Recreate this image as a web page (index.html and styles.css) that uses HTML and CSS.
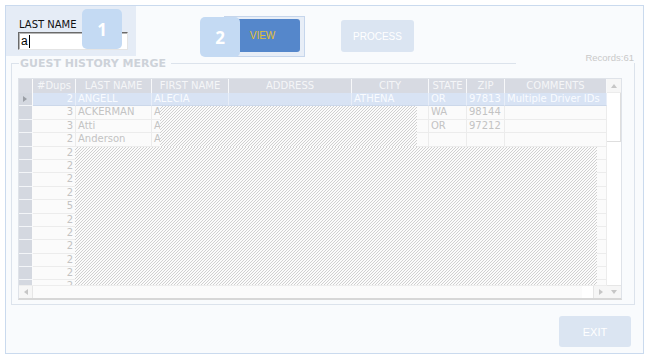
FILE: index.html
```html
<!DOCTYPE html>
<html lang="en">
  <head>
    <meta charset="UTF-8" />
    <title>Guest History Merge</title>
    <link rel="stylesheet" href="styles.css">
  </head>
  <body>
    <div class="window">
      <div class="top-bar">
        <div class="search-panel">
          <div class="field-label">LAST NAME</div>
          <div class="text-box">a<span class="caret"></span></div>
          <span class="step-badge step-one">1</span>
        </div>

        <div class="view-wrap">
          <button class="view-button">VIEW</button>
          <span class="step-badge step-two">2</span>
        </div>

        <button class="pale-button process-button">PROCESS</button>
      </div>

      <div class="group">
        <div class="group-head">
          <span class="group-line short"></span>
          <span class="group-title">GUEST HISTORY MERGE</span>
          <span class="group-line"></span>
        </div>
        <div class="records">Records:61</div>

        <div class="grid">
          <div class="grid-table">
            <div class="grid-row grid-header">
              <div class="row-head"></div>
              <div>#Dups</div>
              <div>LAST NAME</div>
              <div>FIRST NAME</div>
              <div>ADDRESS</div>
              <div>CITY</div>
              <div>STATE</div>
              <div>ZIP</div>
              <div>COMMENTS</div>
            </div>

            <div class="grid-body">
              <div class="grid-row selected">
                <div class="row-head"><span class="row-marker"></span></div>
                <div class="num">2</div>
                <div>ANGELL</div>
                <div>ALECIA</div>
                <div></div>
                <div>ATHENA</div>
                <div>OR</div>
                <div>97813</div>
                <div>Multiple Driver IDs</div>
              </div>
              <div class="grid-row">
                <div class="row-head"></div>
                <div class="num">3</div>
                <div>ACKERMAN</div>
                <div>ANDREW</div>
                <div></div>
                <div></div>
                <div>WA</div>
                <div>98144</div>
                <div></div>
              </div>
              <div class="grid-row">
                <div class="row-head"></div>
                <div class="num">3</div>
                <div>Atti</div>
                <div>Anna</div>
                <div></div>
                <div></div>
                <div>OR</div>
                <div>97212</div>
                <div></div>
              </div>
              <div class="grid-row">
                <div class="row-head"></div>
                <div class="num">2</div>
                <div>Anderson</div>
                <div>Amy</div>
                <div></div><div></div><div></div><div></div><div></div>
              </div>
              <div class="grid-row">
                <div class="row-head"></div><div class="num">2</div>
                <div></div><div></div><div></div><div></div><div></div><div></div><div></div>
              </div>
              <div class="grid-row">
                <div class="row-head"></div><div class="num">2</div>
                <div></div><div></div><div></div><div></div><div></div><div></div><div></div>
              </div>
              <div class="grid-row">
                <div class="row-head"></div><div class="num">2</div>
                <div></div><div></div><div></div><div></div><div></div><div></div><div></div>
              </div>
              <div class="grid-row">
                <div class="row-head"></div><div class="num">2</div>
                <div></div><div></div><div></div><div></div><div></div><div></div><div></div>
              </div>
              <div class="grid-row">
                <div class="row-head"></div><div class="num">5</div>
                <div></div><div></div><div></div><div></div><div></div><div></div><div></div>
              </div>
              <div class="grid-row">
                <div class="row-head"></div><div class="num">2</div>
                <div></div><div></div><div></div><div></div><div></div><div></div><div></div>
              </div>
              <div class="grid-row">
                <div class="row-head"></div><div class="num">2</div>
                <div></div><div></div><div></div><div></div><div></div><div></div><div></div>
              </div>
              <div class="grid-row">
                <div class="row-head"></div><div class="num">2</div>
                <div></div><div></div><div></div><div></div><div></div><div></div><div></div>
              </div>
              <div class="grid-row">
                <div class="row-head"></div><div class="num">2</div>
                <div></div><div></div><div></div><div></div><div></div><div></div><div></div>
              </div>
              <div class="grid-row">
                <div class="row-head"></div><div class="num">2</div>
                <div></div><div></div><div></div><div></div><div></div><div></div><div></div>
              </div>
              <div class="grid-row">
                <div class="row-head"></div><div class="num">2</div>
                <div></div><div></div><div></div><div></div><div></div><div></div><div></div>
              </div>

              <!-- unpainted areas of the grid -->
              <div class="hatch hatch-top"></div>
              <div class="hatch hatch-main"></div>
            </div>

            <div class="hscroll">
              <div class="scroll-btn"><span class="arrow-left"></span></div>
              <div class="hscroll-track"></div>
              <div class="hscroll-thumb"></div>
              <div class="scroll-btn"><span class="arrow-right"></span></div>
            </div>
          </div>

          <div class="vscroll">
            <div class="scroll-btn"><span class="arrow-up"></span></div>
            <div class="vscroll-thumb"></div>
            <div class="vscroll-track"></div>
            <div class="scroll-btn"><span class="arrow-down"></span></div>
          </div>
        </div>
      </div>

      <button class="pale-button exit-button">EXIT</button>
    </div>
  </body>
</html>
```

FILE: styles.css
```css
:root {
  --frame-border: #cadaee;
  --frame-bg: #f9fbfd;
  --panel-bg: #e5ecf6;
  --badge-bg: #c4daf3;
  --blue-button: #5587cb;
  --gold-text: #e4c033;
  --pale-button: #dbe5f2;
  --header-bg: #d7dae2;
  --row-head-bg: #d4d8e0;
  --selected-bg: #d8e3f4;
  --cell-bg: #fbfbfb;
  --cell-line: #ececec;
  --cell-text: #c3c3c3;
  --grid-font: "DejaVu Sans", Verdana, sans-serif;
  --button-font: "Liberation Sans", Arial, sans-serif;
}

html,
body {
  margin: 0;
  padding: 0;
  background-color: #ffffff;
}

.window {
  position: relative;
  display: flex;
  flex-direction: column;
  width: 639px;
  height: 349px;
  margin: 5px;
  box-sizing: border-box;
  border: 1px solid var(--frame-border);
  background-color: var(--frame-bg);
}

/* Top bar */
.top-bar {
  display: flex;
  align-items: flex-start;
  height: 51px;
}

.search-panel {
  position: relative;
  width: 131px;
  height: 51px;
  margin: -1px 0 0 -1px;
  padding: 13px 0 0 13px;
  box-sizing: border-box;
  background-color: var(--panel-bg);
  border-top: 1px solid var(--frame-border);
  border-left: 1px solid var(--frame-border);
}

.field-label {
  font-family: var(--grid-font);
  font-size: 10px;
  line-height: 12px;
  color: #111111;
  margin-bottom: 1px;
}

.text-box {
  display: flex;
  align-items: center;
  width: 110px;
  height: 18px;
  margin-left: -1px;
  box-sizing: border-box;
  padding-left: 2px;
  background-color: #ffffff;
  border-top: 1px solid #6a6a6a;
  border-left: 1px solid #6a6a6a;
  border-right: 1px solid #e4e4e4;
  border-bottom: 1px solid #e4e4e4;
  box-shadow: inset 1px 1px 0 #b5b5b5;
  font-family: var(--button-font);
  font-size: 12px;
  color: #000000;
}

.caret {
  display: inline-block;
  width: 1px;
  height: 13px;
  margin-left: 1px;
  background-color: #000000;
}

.step-badge {
  position: absolute;
  display: flex;
  align-items: center;
  justify-content: center;
  width: 40px;
  height: 40px;
  border-radius: 5px;
  background-color: var(--badge-bg);
  color: #ffffff;
  font-family: "Open Sans", sans-serif;
  font-weight: 700;
  font-size: 17px;
}

.step-one {
  left: 76px;
  top: 3px;
}

.step-two {
  left: -25px;
  top: 0;
}

.view-wrap {
  position: relative;
  width: 81px;
  height: 41px;
  margin: 10px 0 0 88px;
  padding-top: 2px;
  box-sizing: border-box;
  border: 1px solid #c6d6ec;
  background-color: #e8eef7;
}

button {
  font-family: var(--button-font);
  border: none;
  border-radius: 3px;
  padding: 0;
  cursor: pointer;
}

.view-button {
  display: block;
  width: 75px;
  height: 33px;
  background-color: var(--blue-button);
  color: var(--gold-text);
  font-size: 10px;
}

.pale-button {
  background-color: var(--pale-button);
  color: #ffffff;
}

.process-button {
  width: 73px;
  height: 32px;
  margin: 14px 0 0 36px;
  font-size: 10px;
}

.exit-button {
  align-self: flex-end;
  width: 72px;
  height: 31px;
  margin: 11px 12px 0 0;
  font-size: 11px;
}

/* Group box */
.group {
  position: relative;
  width: 624px;
  height: 242px;
  margin: 6px 0 0 5px;
  box-sizing: border-box;
  border: 1px solid #dce3ec;
  border-top: none;
}

.group-head {
  display: flex;
  align-items: center;
  height: 12px;
  margin-top: -6px;
  padding-right: 118px;
}

.group-line {
  flex: 1;
  border-top: 1px solid #dce3ec;
}

.group-line.short {
  flex: 0 0 7px;
}

.group-title {
  padding: 0 5px 0 1px;
  font-family: var(--grid-font);
  font-weight: 700;
  font-size: 11px;
  color: #cdd2d9;
}

.records {
  position: absolute;
  right: 0;
  top: -11px;
  font-family: var(--button-font);
  font-size: 9.5px;
  line-height: 11px;
  color: #c9c9c9;
}

/* Grid */
.grid {
  display: flex;
  width: 604px;
  margin: 9px 0 0 6px;
  box-sizing: border-box;
  border: 1px solid #dfe3e9;
  border-bottom: 2px solid #d7d7d7;
  background-color: var(--cell-bg);
}

.grid-table {
  display: flex;
  flex-direction: column;
  width: 588px;
}

.grid-row {
  display: grid;
  grid-template-columns: 14px 43px 76px 77px 123px 77px 38px 38px 102px;
  height: 13.4px;
  font-family: var(--grid-font);
  font-size: 10px;
  line-height: 12px;
  color: var(--cell-text);
}

.grid-row > div {
  box-sizing: border-box;
  padding: 0 2px;
  overflow: hidden;
  white-space: nowrap;
  border-right: 1px solid var(--cell-line);
  border-bottom: 1px solid var(--cell-line);
}

.grid-row > .num {
  text-align: right;
}

.grid-row > .row-head {
  display: flex;
  align-items: center;
  background-color: var(--row-head-bg);
  border-right: 1px solid #fbfbfb;
  border-bottom: 1px solid #f3f5f8;
}

.grid-header {
  height: 14px;
  background-color: var(--header-bg);
  color: #f5f6f8;
}

.grid-header > div {
  text-align: center;
  border-right: 1px solid #f7f8fa;
  border-bottom: none;
  line-height: 14px;
}

.grid-header > .row-head {
  background-color: var(--header-bg);
  border-bottom: none;
}

.selected > div {
  background-color: var(--selected-bg);
  color: #f9fbff;
  border-right-color: #e8eef8;
  border-bottom-color: #ccd8ea;
}

.row-marker {
  width: 0;
  height: 0;
  margin-left: 2px;
  border-top: 3.5px solid transparent;
  border-bottom: 3.5px solid transparent;
  border-left: 4px solid #9b9fa6;
}

.grid-body {
  position: relative;
  height: 192px;
  overflow: hidden;
}

.hatch {
  position: absolute;
  background-image: url("data:image/svg+xml,%3Csvg xmlns='http://www.w3.org/2000/svg' width='3' height='3'%3E%3Crect width='3' height='3' fill='%23fbfbfb'/%3E%3Cpath d='M2 0h1v1H2zM1 1h1v1H1zM0 2h1v1H0z' fill='%23d0d0d0'/%3E%3C/svg%3E");
}

.hatch-top {
  left: 141px;
  top: 13px;
  width: 257px;
  height: 41px;
}

.hatch-main {
  left: 56px;
  top: 54px;
  width: 522px;
  height: 138px;
}

/* Scrollbars */
.scroll-btn {
  display: flex;
  align-items: center;
  justify-content: center;
  width: 14px;
  height: 13px;
  box-sizing: border-box;
  background-color: #f6f6f6;
}

.hscroll {
  display: flex;
  height: 13px;
  background-color: #f7f7f7;
  border-top: 1px solid #ededed;
  box-sizing: border-box;
}

.hscroll .scroll-btn {
  height: 12px;
  border-right: 1px solid #e6e6e6;
}

.hscroll .scroll-btn:last-child {
  border-right: none;
  border-left: 1px solid #e6e6e6;
}

.hscroll-track {
  flex: 1;
  background-color: #fbfbfb;
}

.hscroll-thumb {
  width: 11px;
  background-color: #ffffff;
}

.vscroll {
  display: flex;
  flex-direction: column;
  width: 14px;
  background-color: #fdfdfd;
}

.vscroll .scroll-btn:first-child {
  height: 14px;
  border-bottom: 1px solid #ececec;
}

.vscroll .scroll-btn:last-child {
  border-top: 1px solid #e6e6e6;
}

.vscroll-thumb {
  height: 48px;
  background-color: #ffffff;
  border-right: 1px solid #dedede;
  border-bottom: 1px solid #dedede;
}

.vscroll-track {
  flex: 1;
  background-color: #ffffff;
}

.arrow-up,
.arrow-down,
.arrow-left,
.arrow-right {
  width: 0;
  height: 0;
}

.arrow-up {
  border-left: 3.5px solid transparent;
  border-right: 3.5px solid transparent;
  border-bottom: 4px solid #c6c6c6;
}

.arrow-down {
  border-left: 3.5px solid transparent;
  border-right: 3.5px solid transparent;
  border-top: 4px solid #c6c6c6;
}

.arrow-left {
  border-top: 3.5px solid transparent;
  border-bottom: 3.5px solid transparent;
  border-right: 4px solid #c6c6c6;
}

.arrow-right {
  border-top: 3.5px solid transparent;
  border-bottom: 3.5px solid transparent;
  border-left: 4px solid #c6c6c6;
}
```
